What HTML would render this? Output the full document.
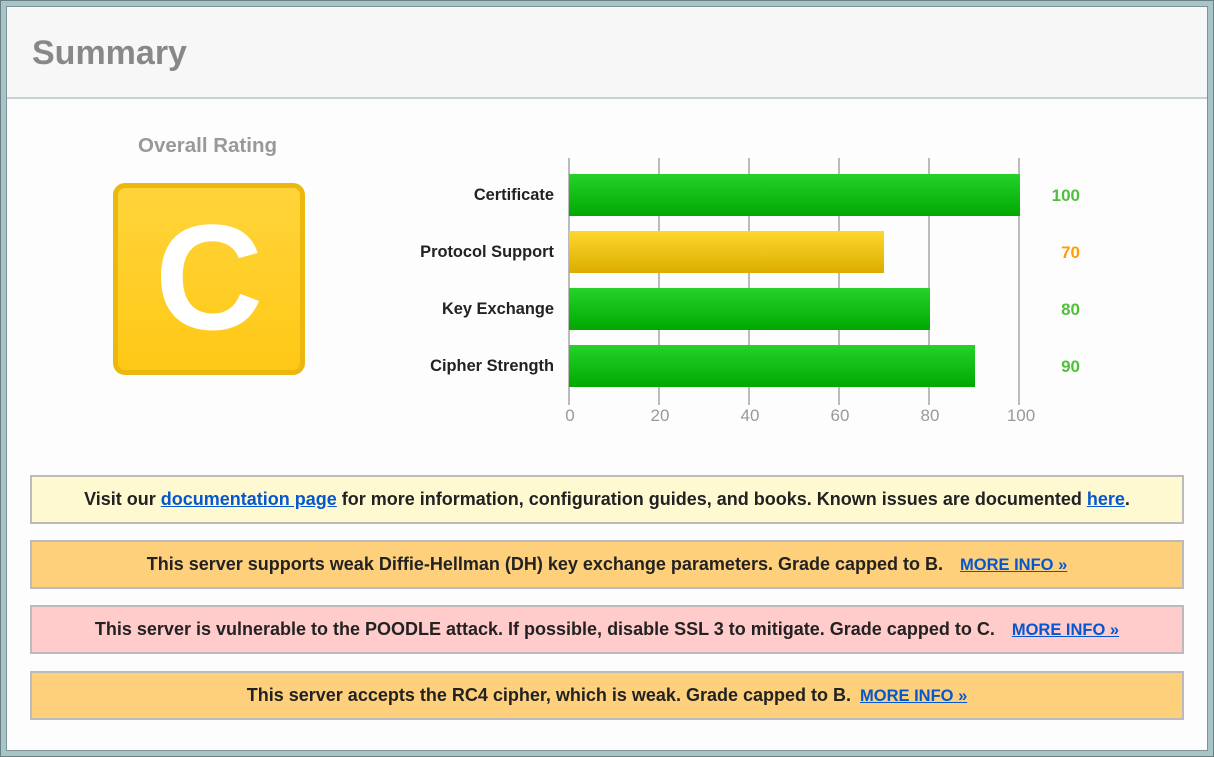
<!DOCTYPE html>
<html><head><style>
*{margin:0;padding:0;box-sizing:border-box}
body{width:1214px;height:757px;background:#a7c4c8;font-family:"Liberation Sans",Arial,sans-serif;position:relative;overflow:hidden}
#o{position:absolute;left:0;top:0;width:1214px;height:757px;border:1px solid #6b7f82}
#c{position:absolute;left:6px;top:6px;width:1202px;height:745px;background:#fdfdfd;border:1px solid #7f9396}
#hd{position:absolute;left:0;top:0;width:100%;height:92px;background:#f7f7f7;border-bottom:2px solid #c5d3d5}
#hd h1{position:absolute;left:25px;top:27px;font-size:34px;font-weight:bold;color:#888}
.or{position:absolute;left:131px;top:127px;font-size:20.5px;font-weight:bold;color:#999}
.grade{position:absolute;left:106px;top:176px;width:192px;height:192px;border-radius:12px;background:linear-gradient(#ffd43a,#ffc815);border:5px solid #ebb80f;color:#fff;font-size:150px;font-weight:bold;text-align:center;line-height:178px}
.lbl{position:absolute;right:653px;font-size:16.4px;font-weight:bold;color:#222;white-space:nowrap}
.grid{position:absolute;top:151px;width:2px;height:247px;background:#bbb}
.bar{position:absolute;left:562px;height:42px;background:linear-gradient(#25d32b,#00a800)}
.bar.y{background:linear-gradient(#ffd72c,#dcad00)}
.val{position:absolute;left:1024px;width:49px;text-align:right;font-size:17px;font-weight:bold;color:#4fc13a}
.ax{position:absolute;top:399px;font-size:17px;color:#999;width:40px;text-align:center}
.box{position:absolute;left:23px;width:1154px;height:49px;border:2px solid #bbb;text-align:center;font-size:18px;font-weight:bold;color:#222;line-height:45px;white-space:nowrap}
.box a{color:#0557d0;text-decoration:underline}
.m{font-size:16.5px;margin-left:12px}
</style></head><body><div id="o"></div><div id="c">
<div id="hd"><h1>Summary</h1></div>
<div class="or">Overall Rating</div>
<div class="grade">C</div>
<div class="grid" style="left:561px"></div><div class="grid" style="left:651px"></div><div class="grid" style="left:741px"></div><div class="grid" style="left:831px"></div><div class="grid" style="left:921px"></div><div class="grid" style="left:1011px"></div>
<div class="bar" style="top:167px;width:451px"></div>
<div class="bar y" style="top:224px;width:315px"></div>
<div class="bar" style="top:281px;width:361px"></div>
<div class="bar" style="top:338px;width:406px"></div>
<div class="lbl" style="top:179px">Certificate</div>
<div class="lbl" style="top:236px">Protocol Support</div>
<div class="lbl" style="top:293px">Key Exchange</div>
<div class="lbl" style="top:350px">Cipher Strength</div>
<div class="val" style="top:179px">100</div>
<div class="val" style="top:236px;color:#ff9d00">70</div>
<div class="val" style="top:293px">80</div>
<div class="val" style="top:350px">90</div>
<div class="ax" style="left:543px">0</div><div class="ax" style="left:633px">20</div><div class="ax" style="left:723px">40</div><div class="ax" style="left:813px">60</div><div class="ax" style="left:903px">80</div><div class="ax" style="left:994px">100</div>
<div class="box" style="top:468px;background:#fff9d2">Visit our <a>documentation page</a> for more information, configuration guides, and books. Known issues are documented <a>here</a>.</div>
<div class="box" style="top:533px;background:#ffd07b">This server supports weak Diffie-Hellman (DH) key exchange parameters. Grade capped to B. <a class="m">MORE INFO »</a></div>
<div class="box" style="top:598px;background:#ffcccb">This server is vulnerable to the POODLE attack. If possible, disable SSL 3 to mitigate. Grade capped to C. <a class="m">MORE INFO »</a></div>
<div class="box" style="top:664px;background:#ffd07b">This server accepts the RC4 cipher, which is weak. Grade capped to B. <a class="m" style="margin-left:4px">MORE INFO »</a></div>
</div></body></html>
